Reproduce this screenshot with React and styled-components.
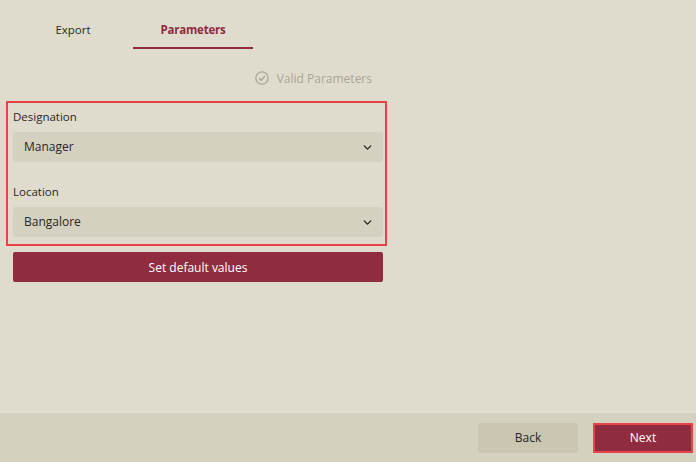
import React from "react";
import styled, { createGlobalStyle } from "styled-components";
import { ChevronDown } from "lucide-react";

const GlobalStyle = createGlobalStyle`
  html, body {
    margin: 0;
    padding: 0;
    height: 100%;
    background: #e0dccd;
  }
  body {
    font-family: "Open Sans", "Noto Sans", sans-serif;
    font-size: 12px;
    color: #2b2622;
  }
`;

const Page = styled.div`
  display: flex;
  flex-direction: column;
  width: 696px;
  height: 462px;
  overflow: hidden;
  box-sizing: border-box;
`;

const Content = styled.div`
  flex: 1;
  width: 370px;
  margin-left: 13px;
`;

const Tabs = styled.div`
  display: flex;
  height: 49px;
`;

const Tab = styled.div`
  width: 120px;
  height: 49px;
  box-sizing: border-box;
  padding-top: 21px;
  line-height: 18px;
  text-align: center;
  font-size: 11.5px;
  font-weight: ${(p) => (p.$active ? 700 : 400)};
  letter-spacing: ${(p) => (p.$active ? "-0.2px" : 0)};
  color: ${(p) => (p.$active ? "#8f2c40" : "#2b2622")};
  border-bottom: 2px solid ${(p) => (p.$active ? "#8f2c40" : "transparent")};
`;

const Status = styled.div`
  display: flex;
  justify-content: flex-end;
  align-items: center;
  gap: 8px;
  height: 20px;
  margin-top: 19px;
  padding-right: 11px;
  color: #a9a69a;
`;

const FieldsBox = styled.div`
  display: flex;
  flex-direction: column;
  gap: 21px;
  width: 381px;
  height: 145px;
  box-sizing: border-box;
  margin: 13px 0 0 -7px;
  padding: 5px 2px 0 5px;
  border: 2px solid #e9434a;
`;

const Field = styled.div`
  display: flex;
  flex-direction: column;
`;

const Label = styled.label`
  height: 17px;
  line-height: 17px;
  margin-bottom: 7px;
  font-size: 11.5px;
`;

const Select = styled.div`
  display: flex;
  justify-content: space-between;
  align-items: center;
  height: 30px;
  padding: 0 9px 2px 11px;
  box-sizing: border-box;
  border-radius: 2px;
  background: #d5d1c0;
`;

const Chevron = styled(ChevronDown)`
  margin-top: 2px;
`;

const PrimaryButton = styled.button`
  display: block;
  width: 100%;
  height: 30px;
  margin-top: 6px;
  padding: 0;
  border: none;
  border-radius: 2px;
  background: #8f2c40;
  color: #fff;
  font: inherit;
`;

const Footer = styled.div`
  display: flex;
  justify-content: flex-end;
  align-items: center;
  gap: 15px;
  height: 49px;
  padding-right: 3px;
  background: #d5d1c0;
`;

const FooterButton = styled.button`
  width: 100px;
  height: 30px;
  box-sizing: border-box;
  padding: 0;
  border: ${(p) => (p.$primary ? "2px solid #e9434a" : "none")};
  border-radius: ${(p) => (p.$primary ? 0 : "2px")};
  background: ${(p) => (p.$primary ? "#8f2c40" : "#cac6b1")};
  color: ${(p) => (p.$primary ? "#fff" : "#2b2622")};
  font: inherit;
`;

const CheckIcon = () => (
  <svg width="14" height="14" viewBox="0 0 14 14" fill="none" stroke="#a9a69a" strokeWidth="1.3">
    <circle cx="7" cy="7" r="6.2" />
    <path d="M4 7.2 L6.2 9.3 L10 5" />
  </svg>
);

const fields = [
  { label: "Designation", value: "Manager" },
  { label: "Location", value: "Bangalore" },
];

const App = () => {
  return (
    <Page>
      <GlobalStyle />
      <Content>
        <Tabs>
          <Tab>Export</Tab>
          <Tab $active>Parameters</Tab>
        </Tabs>
        <Status>
          <CheckIcon />
          <span>Valid Parameters</span>
        </Status>
        <FieldsBox>
          {fields.map((f) => (
            <Field key={f.label}>
              <Label>{f.label}</Label>
              <Select>
                <span>{f.value}</span>
                <Chevron size={13} strokeWidth={2.6} color="#2b2622" />
              </Select>
            </Field>
          ))}
        </FieldsBox>
        <PrimaryButton>Set default values</PrimaryButton>
      </Content>
      <Footer>
        <FooterButton>Back</FooterButton>
        <FooterButton $primary>Next</FooterButton>
      </Footer>
    </Page>
  );
};

export default App;
